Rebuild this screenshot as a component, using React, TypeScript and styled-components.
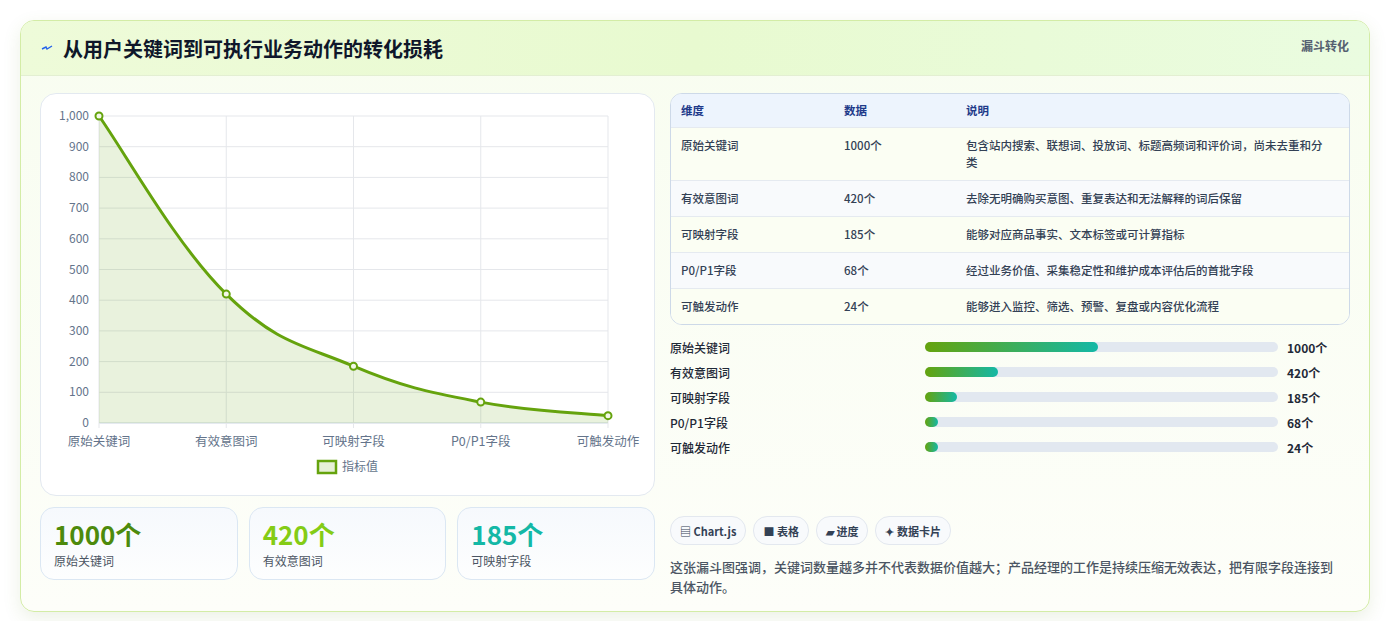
import styled, { createGlobalStyle } from 'styled-components'

const GlobalStyle = createGlobalStyle`
  body {
    margin: 0;
    background: #fff;
    font-family: "Noto Sans CJK SC", "Noto Sans", sans-serif;
    color: #1f2937;
  }
`

const data = [
  { name: '原始关键词', value: 1000, note: '包含站内搜索、联想词、投放词、标题高频词和评价词，尚未去重和分类' },
  { name: '有效意图词', value: 420, note: '去除无明确购买意图、重复表达和无法解释的词后保留' },
  { name: '可映射字段', value: 185, note: '能够对应商品事实、文本标签或可计算指标' },
  { name: 'P0/P1字段', value: 68, note: '经过业务价值、采集稳定性和维护成本评估后的首批字段' },
  { name: '可触发动作', value: 24, note: '能够进入监控、筛选、预警、复盘或内容优化流程' },
]

const Page = styled.div`
  padding: 20px 20px 22px 20px;
`

const Card = styled.div`
  border: 1px solid #d3eca6;
  border-radius: 14px;
  background: linear-gradient(180deg, #f8fdf0 0%, #fdfef9 100%);
  box-shadow: 0 6px 18px rgba(100, 140, 40, 0.12);
  overflow: hidden;
`

const Header = styled.div`
  height: 54px;
  display: flex;
  align-items: center;
  justify-content: space-between;
  padding: 0 20px;
  background: linear-gradient(90deg, #eefbd9 0%, #e8fad0 50%, #eafce0 100%);
  border-bottom: 1px solid #e3efd2;
`

const Title = styled.h2`
  margin: 0;
  font-size: 20px;
  font-weight: 700;
  color: #0f172a;
  display: flex;
  align-items: center;
  gap: 10px;
`

const Tag = styled.span`
  align-self: flex-start;
  margin-top: 16px;
  font-size: 12px;
  font-weight: 700;
  color: #556070;
`

const Body = styled.div`
  display: grid;
  grid-template-columns: 615px 1fr;
  gap: 15px;
  padding: 17px 19px 14px 19px;
`

const Col = styled.div<{ $gap: number }>`
  display: flex;
  flex-direction: column;
  gap: ${p => p.$gap}px;
`

const ChartCard = styled.div`
  height: 403px;
  background: #fff;
  border: 1px solid #e3e9f0;
  border-radius: 16px;
  box-sizing: border-box;
`

const Stats = styled.div`
  display: grid;
  grid-template-columns: repeat(3, 1fr);
  gap: 11px;
`

const Stat = styled.div`
  height: 73px;
  box-sizing: border-box;
  border: 1px solid #dbe7f3;
  border-radius: 14px;
  background: linear-gradient(180deg, #f6f9fd, #fdfefe);
  padding: 9px 13px;
`

const StatValue = styled.div<{ $color: string }>`
  font-size: 26px;
  font-weight: 700;
  line-height: 34px;
  color: ${p => p.$color};
`

const StatLabel = styled.div`
  font-size: 12px;
  color: #4b5563;
  margin-top: 1px;
`

const Table = styled.div`
  border: 1px solid #cdd9e8;
  border-radius: 12px;
  overflow: hidden;
  background: #fff;
`

const Row = styled.div<{ $head?: boolean; $alt?: boolean }>`
  display: grid;
  grid-template-columns: 163px 122px 1fr;
  padding: ${p => (p.$head ? '8px 10px' : '9px 10px')};
  font-size: 11.5px;
  line-height: 17px;
  font-weight: ${p => (p.$head ? 700 : 500)};
  color: ${p => (p.$head ? '#1e3a8a' : '#334155')};
  background: ${p => (p.$head ? '#edf4fd' : p.$alt ? '#f8fafc' : '#fbfef3')};
  border-top: ${p => (p.$head ? 'none' : '1px solid #e5eaf0')};
  span:last-child { padding-right: 10px; }
`

const Bars = styled.div`
  display: flex;
  flex-direction: column;
  gap: 7px;
  margin-top: 1px;
`

const BarRow = styled.div`
  display: grid;
  grid-template-columns: 255px 353px 1fr;
  align-items: center;
  height: 18px;
  font-size: 12px;
  font-weight: 500;
  color: #1f2937;
`

const Track = styled.div`
  height: 10px;
  border-radius: 5px;
  background: #e2e8f0;
`

const Fill = styled.div`
  height: 100%;
  border-radius: 5px;
  background: linear-gradient(90deg, #65a30d, #14b8a6);
`

const BarValue = styled.span`
  padding-left: 9px;
  font-weight: 700;
`

const Chips = styled.div`
  display: flex;
  gap: 7px;
  margin-top: 48px;
`

const Chip = styled.span`
  height: 27px;
  display: inline-flex;
  align-items: center;
  padding: 0 9px;
  border-radius: 14px;
  border: 1px solid #e3e8ef;
  background: #f8fafc;
  font-size: 11px;
  font-weight: 700;
  color: #334155;
`

const Note = styled.p`
  margin: 0;
  padding-right: 12px;
  font-size: 13px;
  line-height: 20px;
  color: #4b5563;
  font-weight: 500;
`

const X0 = 58, X1 = 567, Y0 = 22, Y1 = 329
const px = (i: number) => X0 + (i * (X1 - X0)) / 4
const py = (v: number) => Y1 - (v / 1000) * (Y1 - Y0)

function curvePath() {
  const pts = data.map((d, i) => [px(i), py(d.value)])
  let d = `M${pts[0][0]},${pts[0][1]}`
  for (let i = 0; i < pts.length - 1; i++) {
    const p0 = pts[i - 1] || pts[i]
    const p1 = pts[i]
    const p2 = pts[i + 1]
    const p3 = pts[i + 2] || p2
    const t = 0.2
    const c1 = [p1[0] + (p2[0] - p0[0]) * t, p1[1] + (p2[1] - p0[1]) * t]
    const c2 = [p2[0] - (p3[0] - p1[0]) * t, p2[1] - (p3[1] - p1[1]) * t]
    d += ` C${c1[0]},${c1[1]} ${c2[0]},${c2[1]} ${p2[0]},${p2[1]}`
  }
  return d
}

function Chart() {
  const line = curvePath()
  const ticks = [0, 100, 200, 300, 400, 500, 600, 700, 800, 900, 1000]
  return (
    <svg width="613" height="401" fontFamily='"Noto Sans CJK SC", sans-serif'>
      {ticks.map(t => (
        <g key={t}>
          <line x1={X0} x2={X1} y1={py(t)} y2={py(t)} stroke={t === 0 ? '#cbd5e1' : '#e5e7eb'} />
          <text x={X0 - 10} y={py(t) + 4} fontSize="12" fill="#64748b" textAnchor="end">
            {t === 1000 ? '1,000' : t}
          </text>
        </g>
      ))}
      {data.map((d, i) => (
        <g key={d.name}>
          <line x1={px(i)} x2={px(i)} y1={Y0} y2={Y1 + 5} stroke="#e5e7eb" />
          <text x={px(i)} y={Y1 + 23} fontSize="12.5" fill="#64748b" textAnchor="middle">{d.name}</text>
        </g>
      ))}
      <path d={`${line} L${X1},${Y1} L${X0},${Y1} Z`} fill="rgba(101,163,13,0.14)" />
      <path d={line} fill="none" stroke="#65a30d" strokeWidth="3" />
      {data.map((d, i) => (
        <circle key={i} cx={px(i)} cy={py(d.value)} r="3.5" fill="#f3f8e8" stroke="#65a30d" strokeWidth="2" />
      ))}
      <rect x="277" y="367" width="18" height="12" fill="#e6f0d6" stroke="#65a30d" strokeWidth="2.5" />
      <text x="301" y="377" fontSize="12" fill="#64748b">指标值</text>
    </svg>
  )
}

export default function App() {
  return (
    <Page>
      <GlobalStyle />
      <Card>
        <Header>
          <Title>
            <svg width="12" height="10" viewBox="0 0 12 10">
              <path d="M1 6 L5 4 L6 6 L11 3" stroke="#2563eb" strokeWidth="1.4" fill="none" />
            </svg>
            从用户关键词到可执行业务动作的转化损耗
          </Title>
          <Tag>漏斗转化</Tag>
        </Header>
        <Body>
          <Col $gap={11}>
            <ChartCard>
              <Chart />
            </ChartCard>
            <Stats>
              <Stat>
                <StatValue $color="#4d8a0c">1000个</StatValue>
                <StatLabel>原始关键词</StatLabel>
              </Stat>
              <Stat>
                <StatValue $color="#84cc16">420个</StatValue>
                <StatLabel>有效意图词</StatLabel>
              </Stat>
              <Stat>
                <StatValue $color="#14b8a6">185个</StatValue>
                <StatLabel>可映射字段</StatLabel>
              </Stat>
            </Stats>
          </Col>
          <Col $gap={12}>
            <Table>
              <Row $head>
                <span>维度</span><span>数据</span><span>说明</span>
              </Row>
              {data.map((d, i) => (
                <Row key={d.name} $alt={i % 2 === 1}>
                  <span>{d.name}</span>
                  <span>{d.value}个</span>
                  <span>{d.note}</span>
                </Row>
              ))}
            </Table>
            <Bars>
              {data.map(d => (
                <BarRow key={d.name}>
                  <span>{d.name}</span>
                  <Track>
                    <Fill style={{ width: `max(13px, ${(d.value / 1000) * 49}%)` }} />
                  </Track>
                  <BarValue>{d.value}个</BarValue>
                </BarRow>
              ))}
            </Bars>
            <Chips>
              <Chip>▤ Chart.js</Chip>
              <Chip>■ 表格</Chip>
              <Chip>▰ 进度</Chip>
              <Chip>✦ 数据卡片</Chip>
            </Chips>
            <Note>
              这张漏斗图强调，关键词数量越多并不代表数据价值越大；产品经理的工作是持续压缩无效表达，把有限字段连接到具体动作。
            </Note>
          </Col>
        </Body>
      </Card>
    </Page>
  )
}
